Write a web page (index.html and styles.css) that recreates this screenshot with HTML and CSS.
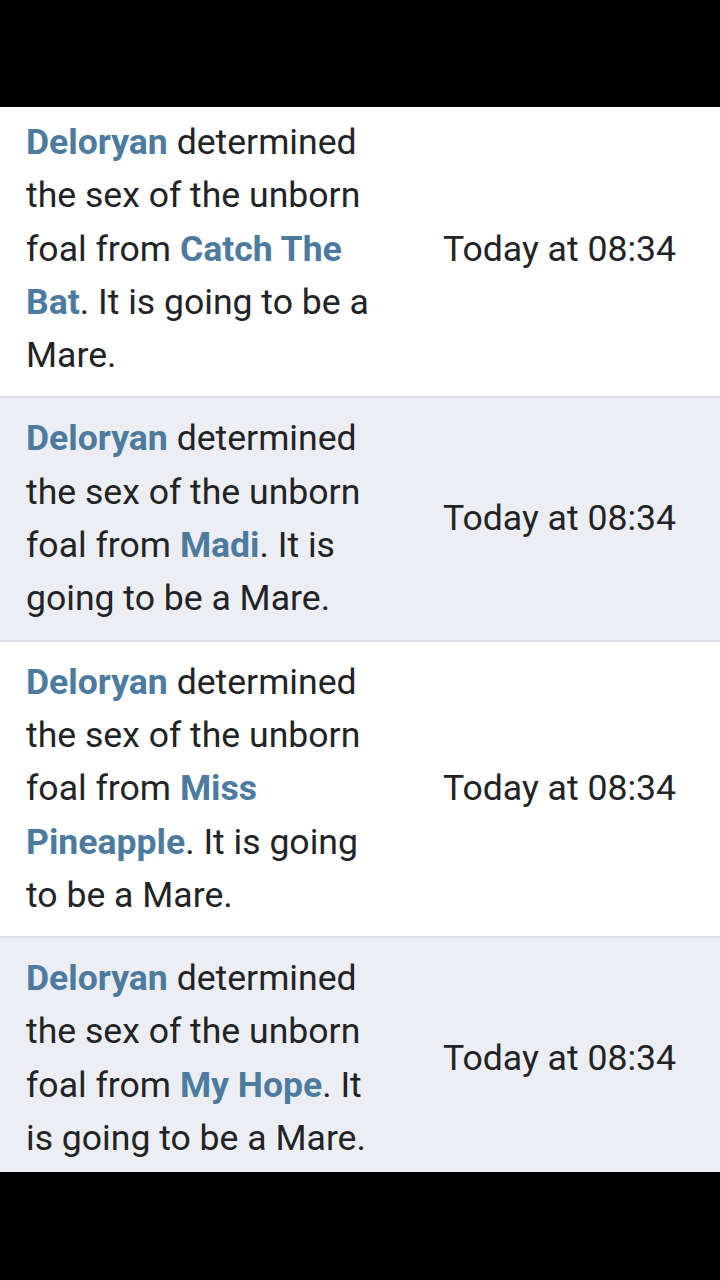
FILE: index.html
```html
<!DOCTYPE html>
<html lang="en">
<head>
    <meta charset="UTF-8">
    <meta name="viewport" content="width=device-width, initial-scale=1.0">
    <title>Alerts</title>
    <link rel="stylesheet" href="styles.css">
</head>
<body>
    <div class="screen">
        <ul class="alerts">
            <li class="alert">
                <div class="alert-text">
                    <a class="user">Deloryan</a> determined the sex of the unborn foal from <a class="horse">Catch The Bat</a>. It is going to be a Mare.
                </div>
                <div class="alert-time">Today at 08:34</div>
            </li>
            <li class="alert odd">
                <div class="alert-text">
                    <a class="user">Deloryan</a> determined the sex of the unborn foal from <a class="horse">Madi</a>. It is going to be a Mare.
                </div>
                <div class="alert-time">Today at 08:34</div>
            </li>
            <li class="alert">
                <div class="alert-text">
                    <a class="user">Deloryan</a> determined the sex of the unborn foal from <a class="horse">Miss Pineapple</a>. It is going to be a Mare.
                </div>
                <div class="alert-time">Today at 08:34</div>
            </li>
            <li class="alert odd">
                <div class="alert-text">
                    <a class="user">Deloryan</a> determined the sex of the unborn foal from <a class="horse">My Hope</a>. It is going to be a Mare.
                </div>
                <div class="alert-time">Today at 08:34</div>
            </li>
        </ul>
    </div>
</body>
</html>
```

FILE: styles.css
```css
* {
    margin: 0;
    padding: 0;
    box-sizing: border-box;
}

li {
    list-style: none;
}

body {
    background: #000;
    font-family: Roboto, "Noto Sans", sans-serif;
    color: #222326;
}

.screen {
    margin-top: 107px;
    height: 1065px;
    overflow: hidden;
    background: #fff;
}

/* the top of the first row is cut off by the bar */
.alerts {
    margin-top: -5px;
}

.alert {
    display: flex;
    align-items: center;
    padding: 14px 0 14px 26px;
    border-bottom: 2px solid #dcdee4;
    background: #fff;
}

.alert.odd {
    background: #eceef3;
}

.alert-text {
    width: 362px;
    font-size: 35.6px;
    line-height: 53.3px;
}

.alert-text a {
    color: #4d7b9f;
    font-weight: bold;
    text-decoration: none;
}

.alert-time {
    flex: 1;
    text-align: right;
    padding-right: 44px;
    font-size: 35.6px;
    line-height: 53.3px;
}
```
